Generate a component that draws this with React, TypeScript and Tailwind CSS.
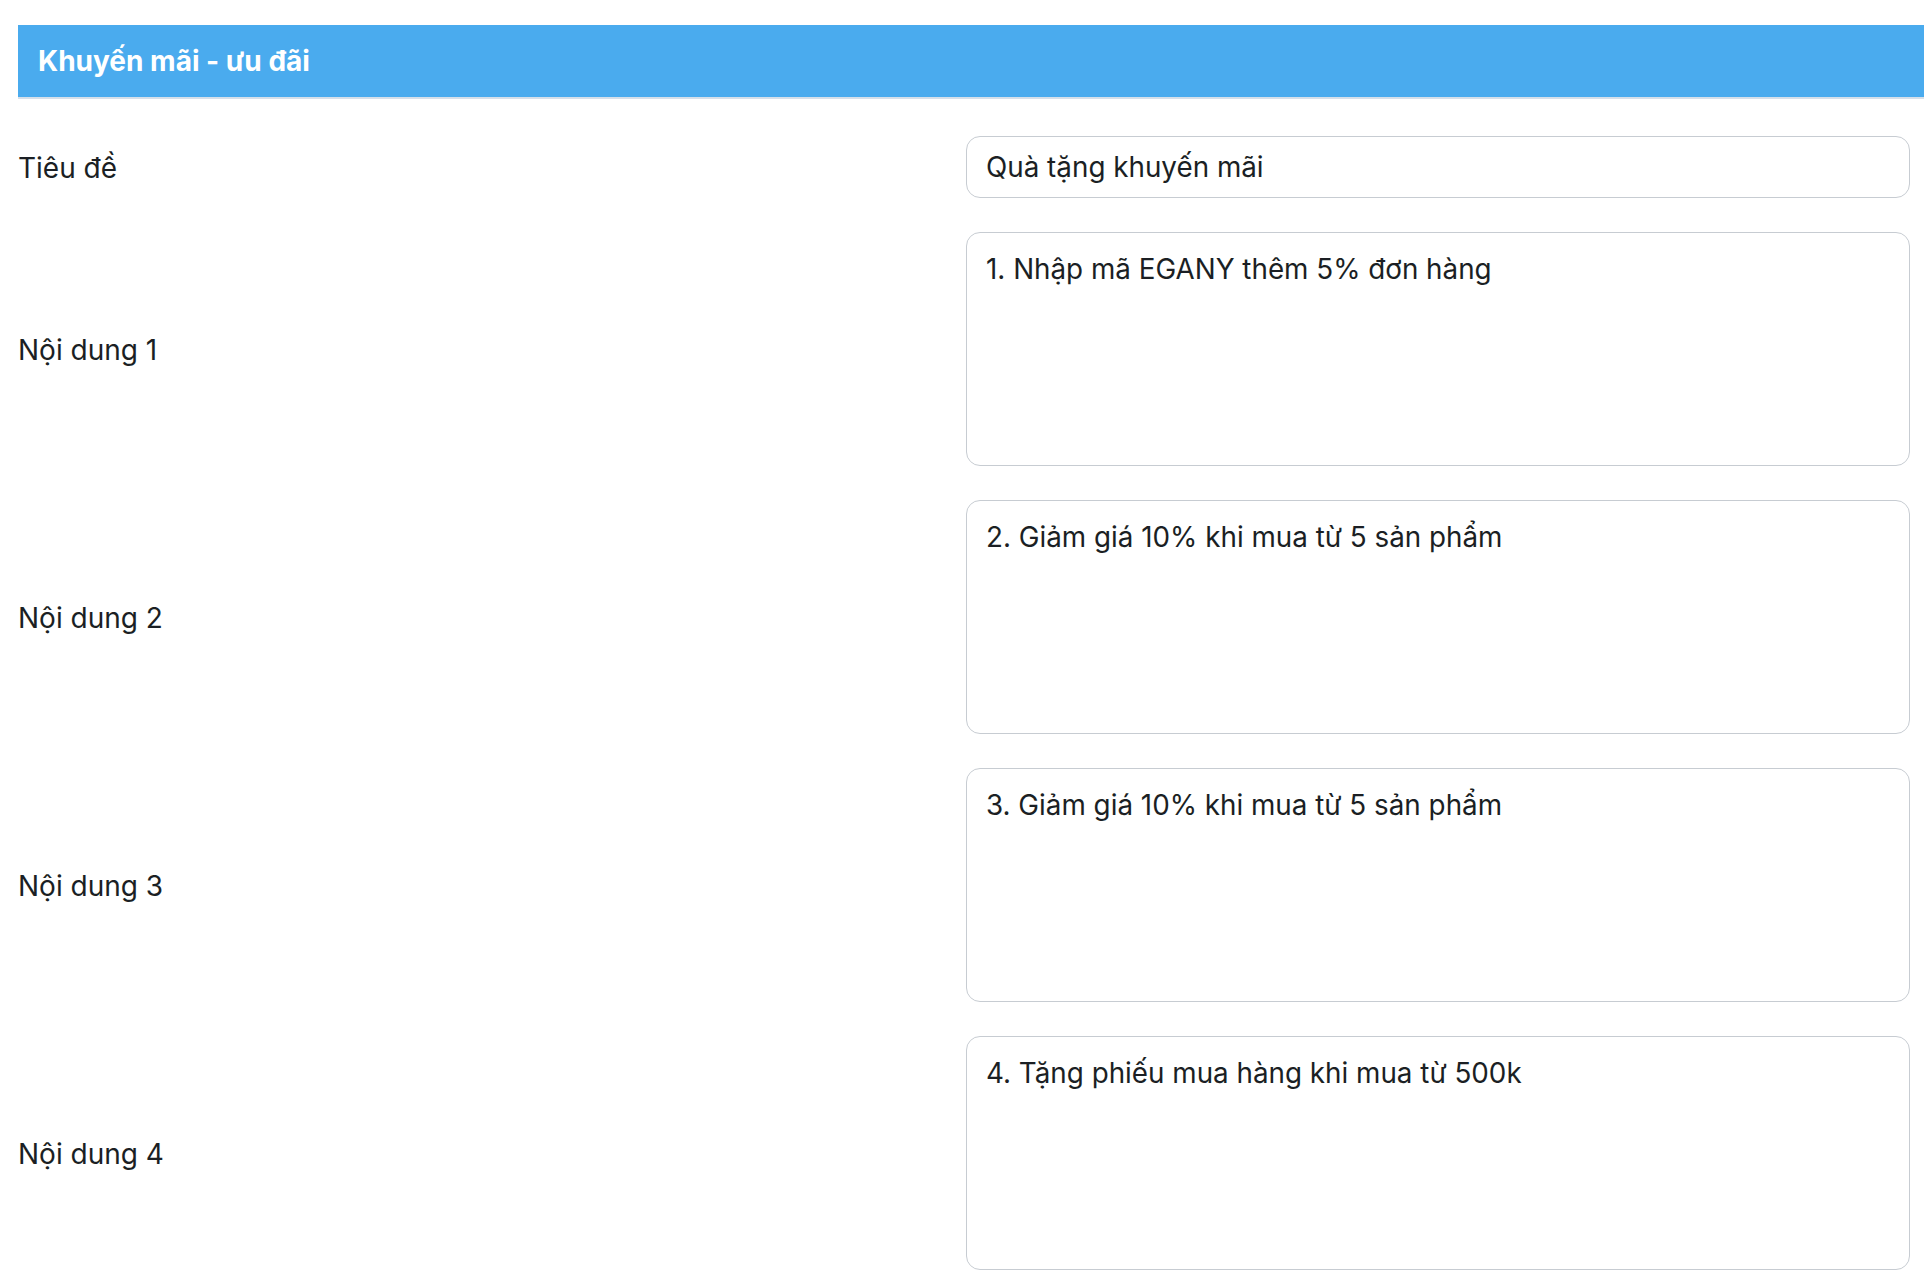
import React from "react";

const rows = [
  "1. Nhập mã EGANY thêm 5% đơn hàng",
  "2. Giảm giá 10% khi mua từ 5 sản phẩm",
  "3. Giảm giá 10% khi mua từ 5 sản phẩm",
  "4. Tặng phiếu mua hàng khi mua từ 500k",
];

const App: React.FunctionComponent<{}> = () => {
  return (
    <div
      className="min-h-screen bg-white pt-[25px] pl-[18px] text-[#1b1f24]"
      style={{ fontFamily: "Inter, 'Noto Sans', sans-serif" }}
    >
      <div className="h-[74px] bg-[#4aabee] border-b-2 border-[#d6e0ea] flex items-center pl-[20px]">
        <h3 className="text-[28px] font-bold text-white leading-none">
          Khuyến mãi - ưu đãi
        </h3>
      </div>

      <form className="pt-[37px] pr-[14px] flex flex-col gap-[34px]">
        <div className="flex items-center">
          <label htmlFor="title" className="w-[948px] shrink-0 text-[28px] pt-[2px]">
            Tiêu đề
          </label>
          <input
            id="title"
            type="text"
            defaultValue="Quà tặng khuyến mãi"
            className="flex-1 h-[62px] px-[19px] text-[27.8px] text-[#1b1f24] border border-[#c7ccd2] rounded-[14px] bg-white outline-none"
          />
        </div>

        {rows.map((text, i) => (
          <div key={i} className="flex items-center">
            <label
              htmlFor={`content${i + 1}`}
              className="w-[948px] shrink-0 text-[28px] pt-[2px]"
            >
              Nội dung {i + 1}
            </label>
            <textarea
              id={`content${i + 1}`}
              defaultValue={text}
              className="flex-1 h-[234px] px-[19px] pt-[16px] text-[27.8px] leading-[40px] text-[#1b1f24] border border-[#c7ccd2] rounded-[14px] bg-white outline-none resize-none"
            />
          </div>
        ))}
      </form>
    </div>
  );
};

export default App;
